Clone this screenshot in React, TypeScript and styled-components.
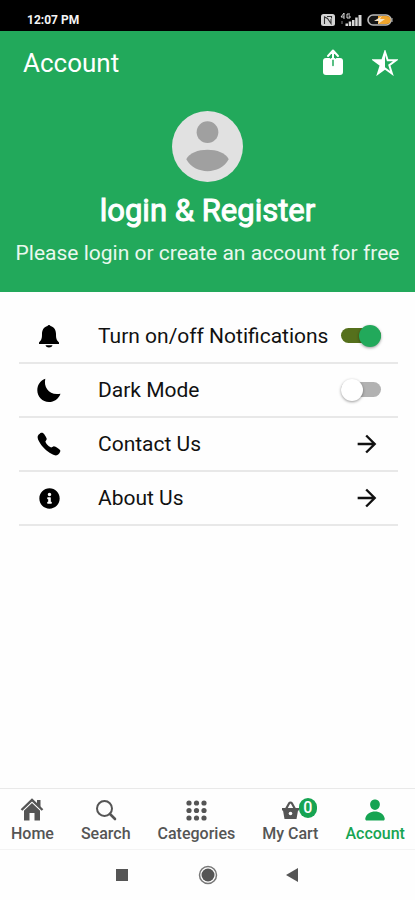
import React, { useState } from "react";
import styled, { createGlobalStyle } from "styled-components";
import { FaInfoCircle } from "react-icons/fa";
import { IoCall, IoPerson } from "react-icons/io5";
import { IoMdArrowForward } from "react-icons/io";

const GREEN = "#22a95b";

const GlobalStyle = createGlobalStyle`
  * { box-sizing: border-box; }
  body { margin: 0; background: #fefefe; font-family: Roboto, sans-serif; }
  button { font-family: inherit; }
`;

const Screen = styled.div`
  min-height: 100vh;
  display: flex;
  flex-direction: column;
  background: #fefefe;
`;

const StatusBar = styled.div`
  height: 31px;
  padding: 9px 22px 0 27px;
  display: flex;
  align-items: center;
  justify-content: space-between;
  background: #000;
  color: #f4f4f4;
  font-size: 12px;
  font-weight: 700;
`;

const StatusIcons = styled.div`
  display: flex;
  align-items: center;
  gap: 5px;
  svg { display: block; }
`;

const Header = styled.header`
  background: ${GREEN};
  color: #fff;
  padding-bottom: 24px;
`;

const TitleBar = styled.div`
  height: 64px;
  padding: 0 15px 0 23px;
  display: flex;
  align-items: center;
  justify-content: space-between;
`;

const PageTitle = styled.h1`
  margin: 0;
  font-size: 26px;
  line-height: 32px;
  font-weight: 400;
`;

const Actions = styled.div`
  display: flex;
  gap: 22px;
`;

const IconButton = styled.button`
  width: 30px;
  height: 30px;
  padding: 0;
  border: 0;
  display: flex;
  align-items: center;
  justify-content: center;
  background: none;
  color: #fff;
`;

const Profile = styled.div`
  padding-top: 16px;
  display: flex;
  flex-direction: column;
  align-items: center;
  text-align: center;
  svg { display: block; }
`;

const LoginButton = styled.button`
  margin-top: 10px;
  padding: 0;
  border: 0;
  background: none;
  color: #fff;
  font-size: 31px;
  line-height: 38px;
  font-weight: 400;
  -webkit-text-stroke: 1px #fff;
`;

const Subtitle = styled.p`
  margin: 8px 0 0;
  font-size: 21px;
  line-height: 30px;
  color: #e9f8ee;
`;

const List = styled.ul`
  list-style: none;
  margin: 0;
  padding: 18px 17px 0 19px;
  flex: 1;
`;

const Item = styled.li`
  border-bottom: 2px solid #e8e8e8;
`;

const rowLayout = `
  width: 100%;
  height: 52px;
  padding: 0 17px;
  display: flex;
  align-items: center;
  color: #111;
  font-size: 21px;
`;

const SwitchRow = styled.label`
  ${rowLayout}
`;

const LinkRow = styled.a`
  ${rowLayout}
  text-decoration: none;
`;

const RowIcon = styled.span`
  width: 26px;
  margin-right: 36px;
  display: flex;
  justify-content: center;
  color: #000;
`;

const RowLabel = styled.span`
  flex: 1;
  white-space: nowrap;
`;

const RowArrow = styled.span`
  width: 28px;
  display: flex;
  justify-content: center;
  color: #111;
`;

const Switch = styled.input`
  appearance: none;
  flex: none;
  width: 40px;
  height: 24px;
  margin: 0;
  display: flex;
  align-items: center;
  justify-content: flex-start;
  position: relative;

  &::before {
    content: "";
    position: absolute;
    inset: 4px 0 5px;
    border-radius: 8px;
    background: #b2b2b2;
  }

  &::after {
    content: "";
    width: 22px;
    height: 22px;
    border-radius: 50%;
    background: #fff;
    box-shadow: 0 1px 3px rgba(0, 0, 0, 0.4);
    position: relative;
  }

  &:checked { justify-content: flex-end; }
  &:checked::before { background: #55701c; }
  &:checked::after { background: ${GREEN}; }
`;

const BottomNav = styled.nav`
  height: 62px;
  padding: 0 3px 0 2px;
  display: flex;
  justify-content: space-between;
  border-top: 1px solid #e9e9e9;
  border-bottom: 1px solid #f3f3f3;
`;

const Tab = styled.a<{ $active?: boolean }>`
  padding: 9px 7px 0 9px;
  display: flex;
  flex-direction: column;
  align-items: center;
  gap: 2px;
  color: ${(p) => (p.$active ? "#16a452" : "#555")};
  font-size: 16px;
  line-height: 20px;
  font-weight: 500;
  text-decoration: none;
`;

const TabIcon = styled.span`
  height: 24px;
  display: flex;
  align-items: center;
`;

const CartIcon = styled(TabIcon)`
  position: relative;
`;

const Badge = styled.span`
  position: absolute;
  left: 100%;
  top: 0;
  width: 18px;
  height: 20px;
  border-radius: 9px;
  background: #16a452;
  color: #fff;
  font-size: 16px;
  line-height: 20px;
  text-align: center;
`;

const SystemBar = styled.div`
  height: 50px;
  padding: 0 112px;
  display: flex;
  align-items: center;
  justify-content: space-between;
`;

const SystemButton = styled.button`
  width: 20px;
  height: 20px;
  padding: 0;
  border: 0;
  background: none;
  svg { display: block; }
`;

function Signal() {
  return (
    <svg width="22" height="14" viewBox="0 0 22 14" fill="#d8d8d8">
      <path d="M4 0 1 4h3M4 0v6M10 1H7v4h3V3H8.500" fill="none" stroke="#d8d8d8" strokeWidth="1" />
      <path d="M5.500 10.500h2.500V13H5.500zM8.700 8.500h2.500V13H8.700zM12 7h2.500v6H12zM15.200 4.500h2.500V13h-2.500zM18.500 2h3v11h-3z" />
      <path d="M1 8h2v3H1z" opacity=".3" />
    </svg>
  );
}

function NfcIcon() {
  return (
    <svg width="14" height="12" viewBox="0 0 14 12">
      <rect width="14" height="12" rx="2.500" fill="#d4d4d4" />
      <path d="M3.500 10V3l3 1.500L10 9.500V5M6 2.500h4.500v2" fill="none" stroke="#333" strokeWidth="1.100" />
    </svg>
  );
}

function Battery() {
  return (
    <svg width="26" height="12" viewBox="0 0 26 12">
      <rect x="1" y="1" width="23" height="10" rx="5" fill="#151515" stroke="#bbb" strokeWidth="1.600" />
      <path d="M11 2h8.500a4 4 0 0 1 0 8H11z" fill="#f1a52c" />
      <path d="m15 2-8 5h5l-1 3 7-5h-5z" fill="#f5e5c8" />
      <path d="M25 4v4" stroke="#bbb" />
    </svg>
  );
}

function ShareIcon() {
  return (
    <svg width="22" height="28" viewBox="0 0 22 28">
      <rect x="1" y="9" width="20" height="17" rx="3" fill="#fff" />
      <path d="M8.500 9v-2M13.500 9v-2M11 9v7.500" stroke={GREEN} strokeWidth="1.500" strokeLinecap="round" />
      <path d="m6 7 5-5.500L16 7M11 2v8" fill="none" stroke="#fff" strokeWidth="2" strokeLinecap="round" strokeLinejoin="round" />
    </svg>
  );
}

function StarIcon() {
  return (
    <svg width="26" height="26" viewBox="0 0 26 26">
      <path d="m13 2 2.700 8.200H24l-6.700 5 2.600 8.300-6.900-5-6.900 5 2.600-8.300-6.700-5h8.300z" fill="none" stroke="#fff" strokeWidth="2" />
      <path d="M13 2v16.500l-6.900 5 2.600-8.300-6.700-5h8.300z" fill="#fff" />
    </svg>
  );
}

function Avatar() {
  return (
    <svg width="71" height="71" viewBox="0 0 72 72">
      <circle cx="36" cy="36" r="36" fill="#e1e1e1" />
      <circle cx="36" cy="21.500" r="11" fill="#a0a0a0" />
      <path d="M14.500 49C20 36 52 36 57.500 49 49 65 23 65 14.500 49z" fill="#a0a0a0" />
    </svg>
  );
}

function BellIcon() {
  return (
    <svg width="22" height="26" viewBox="0 0 22 26">
      <path d="M9.500 3a1.600 1.600 0 0 1 3 0C16.500 4 18 7.500 18 11c0 4.500.500 6 3 8.500V21H1v-1.500C3.500 17 4 15.500 4 11c0-3.500 1.500-7 5.500-8zM7.500 22.300h7c-.800 3-6.200 3-7 0z" />
    </svg>
  );
}

function MoonIcon() {
  return (
    <svg width="26" height="26" viewBox="0 0 26 26">
      <path d="M9.300 1.700C7.300 10.500 13.500 19 24.500 16.700 22.500 22 18 25 13 25 6.400 25 1.300 19.800 1.300 13.300c0-5.200 3-9.800 8-11.600z" />
    </svg>
  );
}

function HomeIcon() {
  return (
    <svg width="24" height="24" viewBox="0 0 24 24" fill="currentColor">
      <path d="M17 2h3.500v8L17 7z" />
      <path d="m4 12 8-7.500 8 7.500v10.500h-5.500V15h-5v7.500H4z" />
      <path d="m1.500 13 10.500-10 10.500 10" fill="none" stroke="#fefefe" strokeWidth="3" />
      <path d="m1.500 12 10.500-10 10.500 10" fill="none" stroke="currentColor" strokeWidth="2.400" />
    </svg>
  );
}

function SearchIcon() {
  return (
    <svg width="22" height="22" viewBox="0 0 22 22" fill="none" stroke="currentColor">
      <circle cx="9.500" cy="9.500" r="7.500" strokeWidth="2" />
      <path d="m15 15 5 5" strokeWidth="2.600" strokeLinecap="round" />
    </svg>
  );
}

function GridDots() {
  const steps = [3, 10.5, 18];
  return (
    <svg width="21" height="21" viewBox="0 0 21 21" fill="currentColor">
      {steps.map((y) => steps.map((x) => <circle key={`${x}-${y}`} cx={x} cy={y} r="2.600" />))}
    </svg>
  );
}

function BasketIcon() {
  return (
    <svg width="17" height="22" viewBox="0 0 17 22">
      <path d="M4 10 7 4.500q1.500-2 3 0L13 10" fill="none" stroke="currentColor" strokeWidth="2.200" />
      <path d="M0 9h17v2.500h-1L14.500 20h-12L1 11.500H0z" fill="currentColor" />
      <circle cx="8.500" cy="14.500" r="1.800" fill="#fefefe" />
    </svg>
  );
}

export default function App() {
  const [notifications, setNotifications] = useState(true);
  const [dark, setDark] = useState(false);
  return (
    <>
      <GlobalStyle />
      <Screen>
        <StatusBar>
          <span>12:07 PM</span>
          <StatusIcons>
            <NfcIcon />
            <Signal />
            <Battery />
          </StatusIcons>
        </StatusBar>
        <Header>
          <TitleBar>
            <PageTitle>Account</PageTitle>
            <Actions>
              <IconButton aria-label="Share"><ShareIcon /></IconButton>
              <IconButton aria-label="Rate"><StarIcon /></IconButton>
            </Actions>
          </TitleBar>
          <Profile>
            <Avatar />
            <LoginButton>login &amp; Register</LoginButton>
            <Subtitle>Please login or create an account for free</Subtitle>
          </Profile>
        </Header>
        <List>
          <Item>
            <SwitchRow>
              <RowIcon><BellIcon /></RowIcon>
              <RowLabel>Turn on/off Notifications</RowLabel>
              <Switch type="checkbox" role="switch" checked={notifications} onChange={(e) => setNotifications(e.target.checked)} />
            </SwitchRow>
          </Item>
          <Item>
            <SwitchRow>
              <RowIcon><MoonIcon /></RowIcon>
              <RowLabel>Dark Mode</RowLabel>
              <Switch type="checkbox" role="switch" checked={dark} onChange={(e) => setDark(e.target.checked)} />
            </SwitchRow>
          </Item>
          <Item>
            <LinkRow href="#contact">
              <RowIcon><IoCall size={26} /></RowIcon>
              <RowLabel>Contact Us</RowLabel>
              <RowArrow><IoMdArrowForward size={28} /></RowArrow>
            </LinkRow>
          </Item>
          <Item>
            <LinkRow href="#about">
              <RowIcon><FaInfoCircle size={21} /></RowIcon>
              <RowLabel>About Us</RowLabel>
              <RowArrow><IoMdArrowForward size={28} /></RowArrow>
            </LinkRow>
          </Item>
        </List>
        <BottomNav>
          <Tab href="#home"><TabIcon><HomeIcon /></TabIcon>Home</Tab>
          <Tab href="#search"><TabIcon><SearchIcon /></TabIcon>Search</Tab>
          <Tab href="#categories"><TabIcon><GridDots /></TabIcon>Categories</Tab>
          <Tab href="#cart"><CartIcon><BasketIcon /><Badge>0</Badge></CartIcon>My Cart</Tab>
          <Tab href="#account" $active><TabIcon><IoPerson size={24} /></TabIcon>Account</Tab>
        </BottomNav>
        <SystemBar>
          <SystemButton aria-label="Recent apps">
            <svg width="20" height="20"><rect x="4" y="4" width="12" height="12" fill="#555" /></svg>
          </SystemButton>
          <SystemButton aria-label="Home screen">
            <svg width="20" height="20">
              <circle cx="10" cy="10" r="8.500" fill="none" stroke="#777" strokeWidth="1.500" />
              <circle cx="10" cy="10" r="6.500" fill="#555" />
            </svg>
          </SystemButton>
          <SystemButton aria-label="Back">
            <svg width="20" height="20"><path d="M15 3v14L3 10z" fill="#555" /></svg>
          </SystemButton>
        </SystemBar>
      </Screen>
    </>
  );
}
